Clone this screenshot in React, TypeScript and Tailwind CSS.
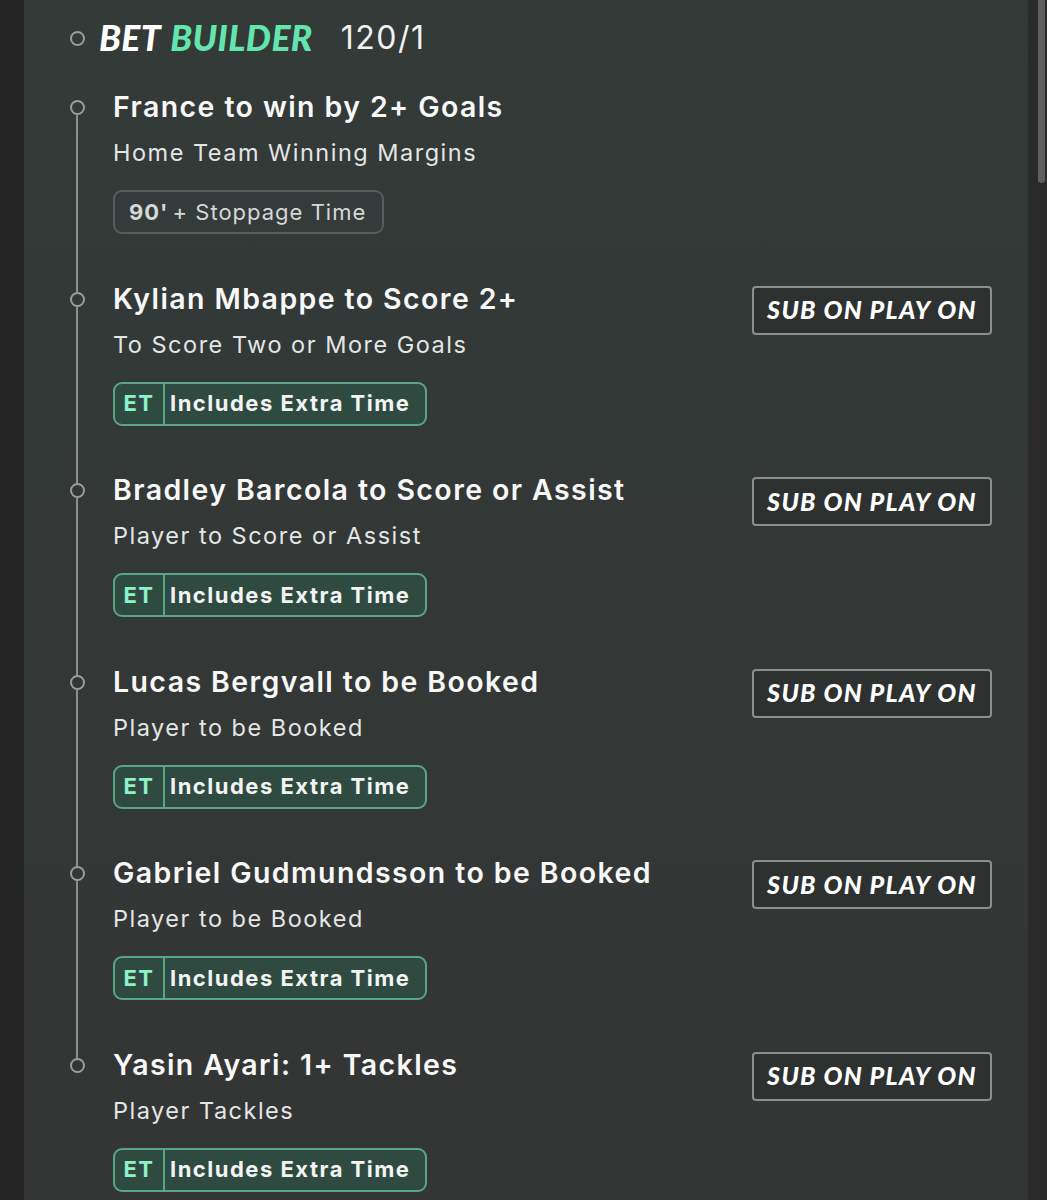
import React from "react";

interface Selection {
  title: string;
  market: string;
  tag: "stoppage" | "et";
  subOn: boolean;
}

const selections: Selection[] = [
  { title: "France to win by 2+ Goals", market: "Home Team Winning Margins", tag: "stoppage", subOn: false },
  { title: "Kylian Mbappe to Score 2+", market: "To Score Two or More Goals", tag: "et", subOn: true },
  { title: "Bradley Barcola to Score or Assist", market: "Player to Score or Assist", tag: "et", subOn: true },
  { title: "Lucas Bergvall to be Booked", market: "Player to be Booked", tag: "et", subOn: true },
  { title: "Gabriel Gudmundsson to be Booked", market: "Player to be Booked", tag: "et", subOn: true },
  { title: "Yasin Ayari: 1+ Tackles", market: "Player Tackles", tag: "et", subOn: true },
];

const dot = "w-[15px] h-[15px] rounded-full border-2 border-[#9a9d9c] shrink-0";

function Tag({ kind }: { kind: Selection["tag"] }) {
  if (kind === "stoppage") {
    return (
      <div className="inline-flex items-center h-[44px] pl-[14px] pr-[16px] rounded-[9px] border-2 border-[#595e5d] bg-[#353b3a] text-[22px] text-[#d6d8d7] tracking-[1px]">
        <span className="font-bold">90'</span>
        <span className="ml-[4px]">+ Stoppage Time</span>
      </div>
    );
  }
  return (
    <div className="inline-flex items-stretch h-[44px] rounded-[9px] border-2 border-[#5aa584] bg-[#2f4a41] text-[22px] font-bold tracking-[1.5px]">
      <span className="flex items-center justify-center w-[50px] text-[#8ef2c8] border-r-2 border-[#5aa584]">ET</span>
      <span className="flex items-center pl-[5px] pr-[15px] text-[#f2f4f3]">Includes Extra Time</span>
    </div>
  );
}

export default function App() {
  return (
    <div className="w-[1047px] h-[1200px] flex overflow-hidden font-['Inter',sans-serif]">
      <div className="w-[24px] bg-[#252525]" />
      <main className="flex-1 bg-gradient-to-b from-[#333a38] via-[#333837] to-[#343535] pl-[64px] pr-[36px]">
        <div className="h-[89px] flex items-start pt-[18px]">
          <div className="flex items-center h-[40px]">
            <div className="w-[26px] flex justify-center -ml-[24px] mr-[9px]">
              <div className={dot} />
            </div>
            <span className="font-['Lato',sans-serif] font-black italic text-[35.5px] tracking-[0.4px] text-white">BET</span>
            <span className="ml-[9px] font-['Lato',sans-serif] font-black italic text-[35.5px] tracking-[0.4px] text-[#63e6ad]">BUILDER</span>
            <span className="ml-[28px] text-[32px] text-[#f2f2f2] tracking-[1.5px]">120/1</span>
          </div>
        </div>

        {selections.map((s, i) => (
          <div key={i} className="flex h-[191.5px] -ml-[24px]">
            <div className="w-[26px] flex flex-col items-center">
              <div className={`w-[2px] h-[11px] ${i === 0 ? "" : "bg-[#8c8f8e]"}`} />
              <div className={dot} />
              <div className={`w-[2px] flex-1 ${i === selections.length - 1 ? "" : "bg-[#8c8f8e]"}`} />
            </div>
            <div className="flex-1 pl-[23px]">
              <div className="flex items-start justify-between">
                <div className="flex flex-col items-start">
                  <div className="h-[36px] leading-[36px] text-[28.5px] font-semibold text-[#f7f7f7] tracking-[1.4px]">{s.title}</div>
                  <div className="mt-[13px] h-[30px] leading-[30px] text-[23.5px] text-[#e4e6e5] tracking-[1.5px]">{s.market}</div>
                  <div className="mt-[22px]">
                    <Tag kind={s.tag} />
                  </div>
                </div>
                {s.subOn && (
                  <div className="mt-[5px] w-[240px] h-[49px] flex items-center justify-center rounded-[4px] border-2 border-[#8d8f8e] bg-[#2d3130] font-['Lato',sans-serif] font-black italic text-[25px] text-white tracking-[1.3px]">
                    SUB ON PLAY ON
                  </div>
                )}
              </div>
            </div>
          </div>
        ))}
      </main>
      <div className="w-[19px] bg-[#2a2a2a] relative">
        <div className="absolute left-[10px] top-0 w-[7px] h-[183px] rounded-b-full bg-[#5f5f5f]" />
      </div>
    </div>
  );
}
